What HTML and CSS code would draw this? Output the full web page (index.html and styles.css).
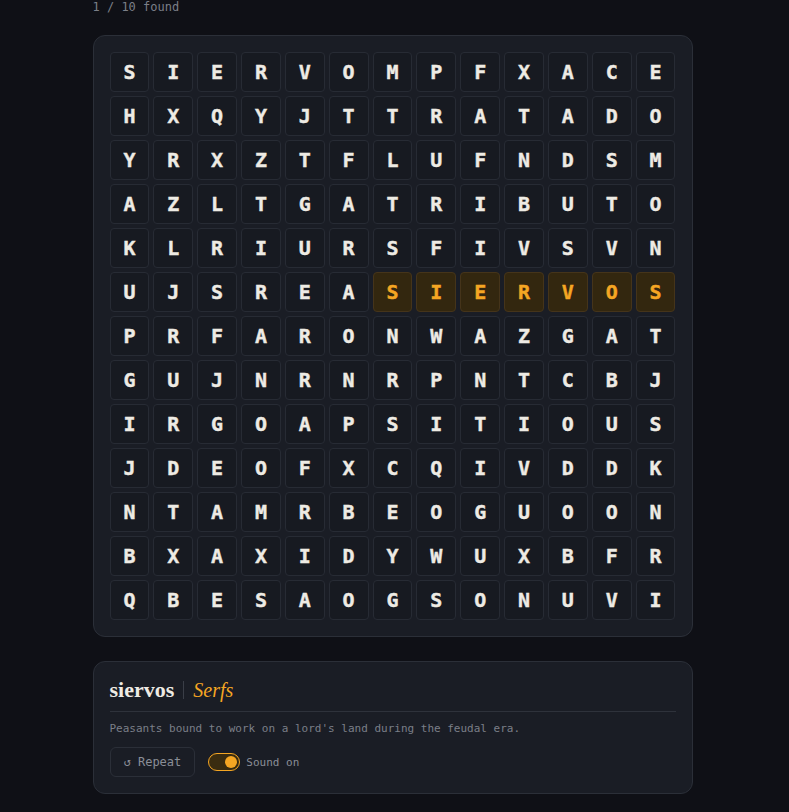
FILE: index.html
```html
<!DOCTYPE html>
<html>

<head>
    <title>Sopa de letras</title>
    <link rel="stylesheet" href="styles.css">
</head>

<body>
    <div class="page">
        <div class="progress">1 / 10 found</div>

        <div class="board">
            <div class="grid" id="grid"></div>
        </div>

        <div class="word-card">
            <div class="word-head">
                <span class="word">siervos</span>
                <span class="divider"></span>
                <span class="meaning">Serfs</span>
            </div>
            <p class="definition">Peasants bound to work on a lord's land during the feudal era.</p>
            <div class="controls">
                <button class="repeat-button">&#8634; Repeat</button>
                <label class="sound">
                    <span class="toggle on"><span class="knob"></span></span>
                    Sound on
                </label>
            </div>
        </div>
    </div>

    <script>
        const rows = [
            "SIERVOMPFXACE",
            "HXQYJTTRATADO",
            "YRXZTFLUFNDSM",
            "AZLTGATRIBUTO",
            "KLRIURSFIVSVN",
            "UJSREASIERVOS",
            "PRFARONWAZGAT",
            "GUJNRNRPNTCBJ",
            "IRGOAPSITIOUS",
            "JDEOFXCQIVDDK",
            "NTAMRBEOGUOON",
            "BXAXIDYWUXBFR",
            "QBESAOGSONUVI"
        ];

        // row 5, columns 6..12 hold the found word
        const found = { row: 5, from: 6, to: 12 };

        let grid = document.getElementById("grid");

        rows.forEach(function (line, r) {
            for (let c = 0; c < line.length; c++) {
                let cell = document.createElement("div");
                cell.className = "cell";
                if (r === found.row && c >= found.from && c <= found.to) {
                    cell.classList.add("found");
                }
                cell.textContent = line[c];
                grid.appendChild(cell);
            }
        });
    </script>
</body>

</html>
```

FILE: styles.css
```css
* {
    margin: 0;
    padding: 0;
    box-sizing: border-box;
}

body {
    background: #0f1016;
    font-family: 'DejaVu Sans Mono', monospace;
    color: #e8e6e1;
}

.page {
    width: 600px;
    margin-left: calc(50% - 302px);
}

.progress {
    font-size: 12px;
    color: #7b7f88;
    line-height: 14px;
}

.board {
    margin-top: 21px;
    background: #1a1d25;
    border: 1px solid #2b2f38;
    border-radius: 12px;
    padding: 16px;
}

.grid {
    display: grid;
    grid-template-columns: repeat(13, 1fr);
    gap: 4px;
}

.cell {
    height: 40px;
    display: flex;
    align-items: center;
    justify-content: center;
    background: #171a21;
    border: 1px solid #272b34;
    border-radius: 4px;
    font-size: 20px;
    font-weight: bold;
    -webkit-text-stroke: 0.4px currentColor;
    color: #eeebe4;
}

.cell.found {
    background: #33270f;
    border-color: #45341a;
    color: #f5a623;
}

.word-card {
    margin-top: 24px;
    background: #1a1d25;
    border: 1px solid #2b2f38;
    border-radius: 12px;
    padding: 17px 16px 16px;
}

.word-head {
    display: flex;
    align-items: center;
    gap: 9px;
    line-height: 22px;
    padding-bottom: 10px;
    border-bottom: 1px solid #2e323b;
}

.word {
    font-family: 'Liberation Serif', serif;
    font-weight: bold;
    font-size: 22px;
    color: #eeebe4;
}

.divider {
    width: 1px;
    height: 18px;
    background: #3a3e47;
}

.meaning {
    font-family: 'Liberation Serif', serif;
    font-style: italic;
    font-size: 20px;
    color: #f5a623;
}

.definition {
    margin-top: 10px;
    font-size: 11px;
    color: #7b7f88;
}

.controls {
    display: flex;
    align-items: center;
    gap: 13px;
    margin-top: 12px;
}

.repeat-button {
    background: transparent;
    border: 1px solid #2b2f38;
    border-radius: 6px;
    color: #8a8e97;
    font-family: 'DejaVu Sans Mono', monospace;
    font-size: 12px;
    padding: 7px 13px;
    cursor: pointer;
}

.sound {
    display: flex;
    align-items: center;
    gap: 6px;
    font-size: 11px;
    color: #8a8e97;
}

.toggle {
    width: 32px;
    height: 18px;
    border-radius: 9px;
    border: 1.5px solid #f5a623;
    background: #3a2c10;
    display: flex;
    align-items: center;
    padding: 0 2px;
}

.toggle.on {
    justify-content: flex-end;
}

.knob {
    width: 12px;
    height: 12px;
    border-radius: 50%;
    background: #f5a623;
}
```
